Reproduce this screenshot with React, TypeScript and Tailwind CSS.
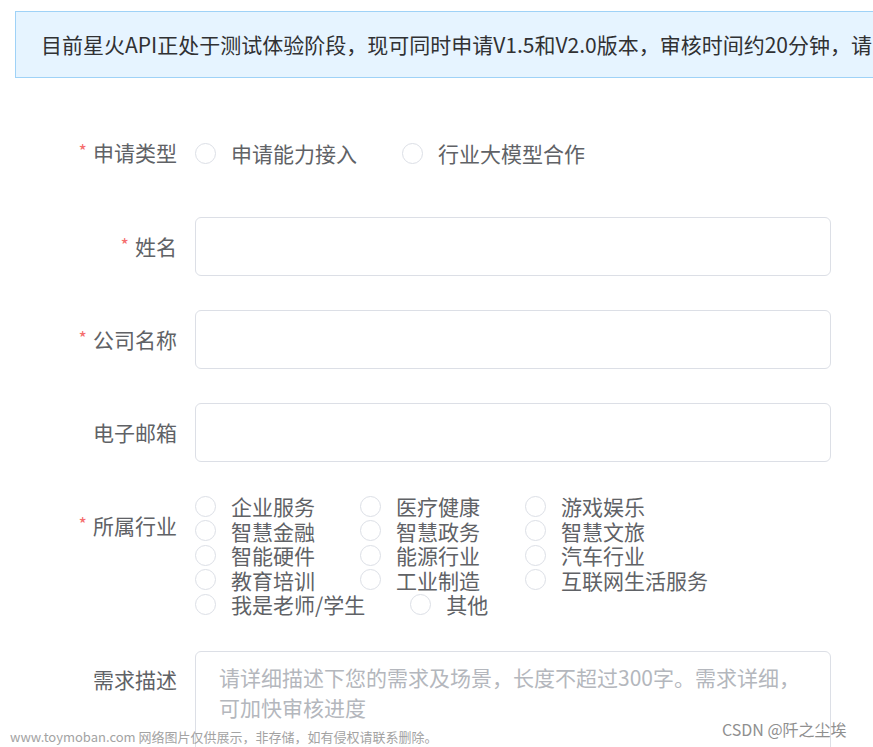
import React from 'react';

const FONT = '"Noto Sans CJK SC", "Noto Sans", sans-serif';

const industries = [
  '企业服务',
  '医疗健康',
  '游戏娱乐',
  '智慧金融',
  '智慧政务',
  '智慧文旅',
  '智能硬件',
  '能源行业',
  '汽车行业',
  '教育培训',
  '工业制造',
  '互联网生活服务',
  '我是老师/学生',
  '其他',
];

function Radio({ label, height = 'h-[60px]' }: { label: string; height?: string }) {
  return (
    <label className={`flex items-center ${height} mr-[45px] cursor-pointer`}>
      <span className="w-[21px] h-[21px] rounded-full border border-[#dcdfe6] bg-white shrink-0" />
      <span className="ml-[15px] text-[21px] leading-[22px] text-[#606266] whitespace-nowrap">{label}</span>
    </label>
  );
}

function FormLabel({ text, required = false }: { text: string; required?: boolean }) {
  return (
    <div className="w-[177px] shrink-0 h-[59px] flex items-center justify-end text-[21px] text-[#606266]">
      {required && <span className="text-[#f56c6c] text-[18px] mr-[6px] -mt-[5px]">*</span>}
      <span>{text}</span>
    </div>
  );
}

export default function App() {
  return (
    <div
      className="relative w-[873px] h-[747px] overflow-hidden bg-white"
      style={{ fontFamily: FONT }}
    >
      {/* notice */}
      <div className="mt-[11px] ml-[15px] w-[858px] h-[67px] border border-r-0 border-[#9fd2f7] bg-[#e6f4ff] flex items-center pl-[25px] overflow-hidden">
        <p className="text-[21px] text-[#303133] whitespace-nowrap">
          目前星火API正处于测试体验阶段，现可同时申请V1.5和V2.0版本，审核时间约20分钟，请
        </p>
      </div>

      <form className="mt-[45px] flex flex-col gap-[34px]">
        <div className="flex items-center h-[60px]">
          <FormLabel text="申请类型" required />
          <div className="ml-[18px] flex">
            <Radio label="申请能力接入" />
            <Radio label="行业大模型合作" />
          </div>
        </div>

        <div className="flex">
          <FormLabel text="姓名" required />
          <input className="ml-[18px] w-[636px] h-[59px] rounded-[6px] border border-[#dcdfe6] outline-none px-[23px] text-[21px]" />
        </div>

        <div className="flex">
          <FormLabel text="公司名称" required />
          <input className="ml-[18px] w-[636px] h-[59px] rounded-[6px] border border-[#dcdfe6] outline-none px-[23px] text-[21px]" />
        </div>

        <div className="flex">
          <FormLabel text="电子邮箱" />
          <input className="ml-[18px] w-[636px] h-[59px] rounded-[6px] border border-[#dcdfe6] outline-none px-[23px] text-[21px]" />
        </div>

        <div className="flex items-start">
          <FormLabel text="所属行业" required />
          <div className="ml-[18px] -mt-[2px] w-[600px] flex flex-wrap">
            {industries.map((item) => (
              <Radio key={item} label={item} height="h-[24.5px]" />
            ))}
          </div>
        </div>

        <div className="flex items-start">
          <FormLabel text="需求描述" />
          <textarea
            className="ml-[18px] w-[636px] h-[140px] rounded-[6px] border border-[#dcdfe6] outline-none resize-none pt-[10px] px-[23px] text-[21px] leading-[30px] placeholder:text-[#b4b7bd]"
            placeholder="请详细描述下您的需求及场景，长度不超过300字。需求详细，可加快审核进度"
          />
        </div>
      </form>

      {/* watermarks */}
      <div className="absolute left-[10px] bottom-[1px] text-[13px] text-[#a3a3a3] whitespace-nowrap">
        www.toymoban.com 网络图片仅供展示，非存储，如有侵权请联系删除。
      </div>
      <div className="absolute left-[722px] top-[717px] text-[16px] text-[#8f8f8f] whitespace-nowrap">
        CSDN @阡之尘埃
      </div>
    </div>
  );
}
